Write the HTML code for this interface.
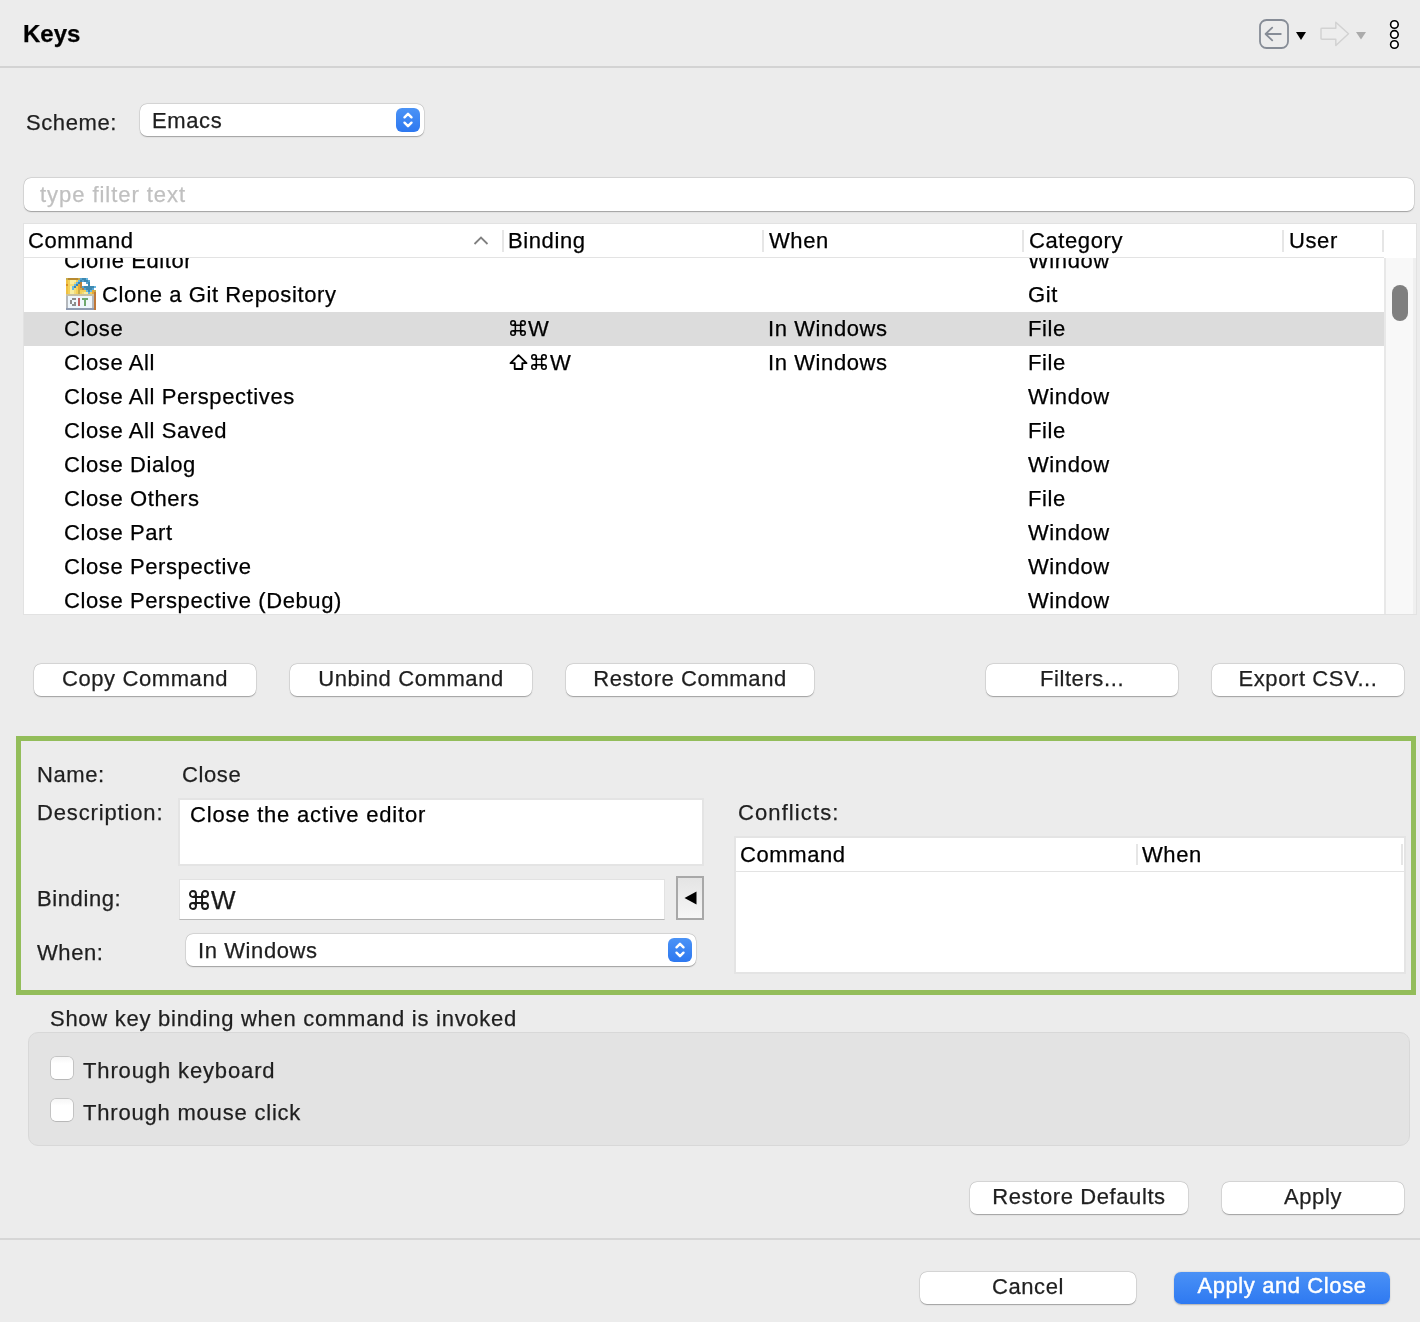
<!DOCTYPE html>
<html><head><meta charset="utf-8">
<style>
*{box-sizing:border-box;margin:0;padding:0}
html,body{-webkit-font-smoothing:antialiased;-webkit-text-stroke:0.25px currentColor;width:1420px;height:1322px;overflow:hidden;background:#ececec;font-family:"Liberation Sans",sans-serif;color:#1f1f1f}
.a{position:absolute}
.t{position:absolute;font-size:22px;line-height:25px;white-space:nowrap;letter-spacing:0.6px}
.btn{position:absolute;background:#fff;border-radius:7px;box-shadow:0 0 0 0.5px rgba(0,0,0,0.13),0 0.5px 1.2px rgba(0,0,0,0.28);font-size:22px;line-height:30px;text-align:center;letter-spacing:0.6px;color:#1f1f1f;white-space:nowrap}
.hsep{position:absolute;width:2px;background:#e6e6e6}
.k{color:#000}
</style></head><body><div style="position:absolute;left:0;top:0;width:1420px;height:1322px;will-change:transform">

<div class="a" style="left:23px;top:20px;font-size:24px;line-height:27px;font-weight:bold;color:#000">Keys</div>
<div class="a" style="left:0;top:66px;width:1420px;height:2px;background:#d3d3d3"></div>
<svg class="a" style="left:1250px;top:10px" width="170" height="48" viewBox="1250 10 170 48"><rect x="1260" y="20" width="28" height="28" rx="6.5" fill="none" stroke="#868c96" stroke-width="1.8"/><path d="M1280.8 34H1265.6M1272.2 27.6L1265.6 34L1272.2 40.4" fill="none" stroke="#868c96" stroke-width="1.8" stroke-linecap="round" stroke-linejoin="round"/><path d="M1296 32H1306L1301 40Z" fill="#000"/><path d="M1321 29V38.5Q1321 39.2 1322 39.2H1335.8V45.5L1348.5 33.8L1335.8 22.3V28.3H1322Q1321 28.3 1321 29Z" fill="#ededed" stroke="#d2d2d2" stroke-width="1.5" stroke-linejoin="round"/><path d="M1356 32H1366L1361 39.5Z" fill="#ababab"/><circle cx="1394.4" cy="24.5" r="3.8" fill="#fff" stroke="#000" stroke-width="1.6"/><circle cx="1394.4" cy="34.4" r="3.8" fill="#fff" stroke="#000" stroke-width="1.6"/><circle cx="1394.4" cy="44.5" r="3.8" fill="#fff" stroke="#000" stroke-width="1.6"/></svg>
<div class="t" style="left:26px;top:110px;">Scheme:</div>
<div class="a" style="left:140px;top:104px;width:284px;height:32px;background:#fff;border-radius:7px;box-shadow:0 0 0 0.5px rgba(0,0,0,0.13),0 0.5px 1.2px rgba(0,0,0,0.28)"></div>
<div class="t" style="left:152px;top:108px;">Emacs</div>
<div class="a" style="left:396px;top:108px;width:24px;height:24px;border-radius:6px;background:linear-gradient(#4b93f6,#2d78f0)"><svg class="a" style="left:0;top:0" width="24" height="24" viewBox="0 0 24 24"><path d="M8.5 9.3L12 5.8L15.5 9.3M8.5 14.7L12 18.2L15.5 14.7" fill="none" stroke="#fff" stroke-width="2.4" stroke-linecap="round" stroke-linejoin="round"/></svg></div>
<div class="a" style="left:24px;top:178px;width:1390px;height:33px;background:#fff;border-radius:7px;box-shadow:0 0 0 0.5px rgba(0,0,0,0.13),0 0.5px 1.2px rgba(0,0,0,0.28)"></div>
<div class="t" style="left:40px;top:182px;color:#c0c0c0;letter-spacing:0.95px">type filter text</div>
<div class="a" style="left:23px;top:223px;width:1394px;height:392px;background:#fff;border:1px solid #e2e2e2"></div>
<div class="a" style="left:24px;top:257px;width:1360px;height:1px;background:#e3e3e3"></div>
<div class="t" style="left:28px;top:228px;color:#000">Command</div>
<svg class="a" style="left:472px;top:235px" width="18" height="12" viewBox="0 0 18 12"><path d="M2.5 9L9 2.5L15.5 9" fill="none" stroke="#808080" stroke-width="1.8"/></svg>
<div class="hsep" style="left:502px;top:230px;height:22px"></div>
<div class="t" style="left:508px;top:228px;color:#000">Binding</div>
<div class="hsep" style="left:762px;top:230px;height:22px"></div>
<div class="t" style="left:769px;top:228px;color:#000">When</div>
<div class="hsep" style="left:1022px;top:230px;height:22px"></div>
<div class="t" style="left:1029px;top:228px;color:#000">Category</div>
<div class="hsep" style="left:1282px;top:230px;height:22px"></div>
<div class="t" style="left:1289px;top:228px;color:#000">User</div>
<div class="hsep" style="left:1382px;top:230px;height:22px"></div>
<div class="a" style="left:24px;top:258px;width:1360px;height:356px;overflow:hidden">
<div class="a" style="left:0;top:-14px;width:1360px;height:34px;">
<div class="t" style="left:40px;top:4px;color:#000">Clone Editor</div>
<div class="t" style="left:1004px;top:4px;color:#000">Window</div>
</div>
<div class="a" style="left:0;top:20px;width:1360px;height:34px;">
<div class="t" style="left:78px;top:4px;color:#000">Clone a Git Repository</div>
<div class="t" style="left:1004px;top:4px;color:#000">Git</div>
<svg class="a" style="left:42px;top:0px" width="30" height="32" viewBox="0 0 15 16" shape-rendering="crispEdges"><rect x="0" y="0" width="1" height="1" fill="#c8ac48"/><rect x="1" y="0" width="1" height="1" fill="#b88a30"/><rect x="2" y="0" width="1" height="1" fill="#b88a30"/><rect x="3" y="0" width="1" height="1" fill="#b88a30"/><rect x="4" y="0" width="1" height="1" fill="#b88a30"/><rect x="5" y="0" width="1" height="1" fill="#b88a30"/><rect x="6" y="0" width="1" height="1" fill="#c8ac48"/><rect x="7" y="0" width="1" height="1" fill="#58a4d0"/><rect x="8" y="0" width="1" height="1" fill="#3d88b0"/><rect x="9" y="0" width="1" height="1" fill="#3d88b0"/><rect x="10" y="0" width="1" height="1" fill="#68b8e2"/><rect x="0" y="1" width="1" height="1" fill="#f0c040"/><rect x="1" y="1" width="1" height="1" fill="#f4d058"/><rect x="2" y="1" width="1" height="1" fill="#f8eea0"/><rect x="3" y="1" width="1" height="1" fill="#f8eea0"/><rect x="4" y="1" width="1" height="1" fill="#f8eea0"/><rect x="5" y="1" width="1" height="1" fill="#f4d058"/><rect x="6" y="1" width="1" height="1" fill="#68b8e2"/><rect x="7" y="1" width="1" height="1" fill="#3d88b0"/><rect x="8" y="1" width="1" height="1" fill="#58a4d0"/><rect x="9" y="1" width="1" height="1" fill="#3d88b0"/><rect x="10" y="1" width="1" height="1" fill="#3d88b0"/><rect x="11" y="1" width="1" height="1" fill="#58a4d0"/><rect x="0" y="2" width="1" height="1" fill="#f0c040"/><rect x="1" y="2" width="1" height="1" fill="#f4d058"/><rect x="2" y="2" width="1" height="1" fill="#f8eea0"/><rect x="3" y="2" width="1" height="1" fill="#f8eea0"/><rect x="4" y="2" width="1" height="1" fill="#f3dc78"/><rect x="5" y="2" width="1" height="1" fill="#68b8e2"/><rect x="6" y="2" width="1" height="1" fill="#3d88b0"/><rect x="7" y="2" width="1" height="1" fill="#b8823a"/><rect x="8" y="2" width="1" height="1" fill="#ffffff"/><rect x="9" y="2" width="1" height="1" fill="#ffffff"/><rect x="10" y="2" width="1" height="1" fill="#58a4d0"/><rect x="11" y="2" width="1" height="1" fill="#3d88b0"/><rect x="0" y="3" width="1" height="1" fill="#d89028"/><rect x="1" y="3" width="1" height="1" fill="#f4d058"/><rect x="2" y="3" width="1" height="1" fill="#f3dc78"/><rect x="3" y="3" width="1" height="1" fill="#f3dc78"/><rect x="4" y="3" width="1" height="1" fill="#68b8e2"/><rect x="5" y="3" width="1" height="1" fill="#3d88b0"/><rect x="6" y="3" width="1" height="1" fill="#e4a838"/><rect x="7" y="3" width="1" height="1" fill="#b8823a"/><rect x="8" y="3" width="1" height="1" fill="#ffffff"/><rect x="9" y="3" width="1" height="1" fill="#ffffff"/><rect x="10" y="3" width="1" height="1" fill="#ffffff"/><rect x="11" y="3" width="1" height="1" fill="#3d88b0"/><rect x="0" y="4" width="1" height="1" fill="#f0c040"/><rect x="1" y="4" width="1" height="1" fill="#f4d058"/><rect x="2" y="4" width="1" height="1" fill="#f8eea0"/><rect x="3" y="4" width="1" height="1" fill="#68b8e2"/><rect x="4" y="4" width="1" height="1" fill="#3d88b0"/><rect x="5" y="4" width="1" height="1" fill="#f4d058"/><rect x="6" y="4" width="1" height="1" fill="#e4a838"/><rect x="7" y="4" width="1" height="1" fill="#b8823a"/><rect x="8" y="4" width="1" height="1" fill="#58a4d0"/><rect x="9" y="4" width="1" height="1" fill="#3d88b0"/><rect x="10" y="4" width="1" height="1" fill="#3d88b0"/><rect x="11" y="4" width="1" height="1" fill="#3d88b0"/><rect x="12" y="4" width="1" height="1" fill="#3d88b0"/><rect x="13" y="4" width="1" height="1" fill="#3d88b0"/><rect x="14" y="4" width="1" height="1" fill="#68b8e2"/><rect x="0" y="5" width="1" height="1" fill="#f0c040"/><rect x="1" y="5" width="1" height="1" fill="#f4d058"/><rect x="2" y="5" width="1" height="1" fill="#f8eea0"/><rect x="3" y="5" width="1" height="1" fill="#68b8e2"/><rect x="4" y="5" width="1" height="1" fill="#f3dc78"/><rect x="5" y="5" width="1" height="1" fill="#f4d058"/><rect x="6" y="5" width="1" height="1" fill="#e4a838"/><rect x="7" y="5" width="1" height="1" fill="#c8ac48"/><rect x="8" y="5" width="1" height="1" fill="#b8823a"/><rect x="9" y="5" width="1" height="1" fill="#58a4d0"/><rect x="10" y="5" width="1" height="1" fill="#3d88b0"/><rect x="11" y="5" width="1" height="1" fill="#3d88b0"/><rect x="12" y="5" width="1" height="1" fill="#3d88b0"/><rect x="13" y="5" width="1" height="1" fill="#58a4d0"/><rect x="0" y="6" width="1" height="1" fill="#f0c040"/><rect x="1" y="6" width="1" height="1" fill="#f4d058"/><rect x="2" y="6" width="1" height="1" fill="#f8eea0"/><rect x="3" y="6" width="1" height="1" fill="#f8eea0"/><rect x="4" y="6" width="1" height="1" fill="#f3dc78"/><rect x="5" y="6" width="1" height="1" fill="#f4d058"/><rect x="6" y="6" width="1" height="1" fill="#c8ac48"/><rect x="7" y="6" width="1" height="1" fill="#f4d058"/><rect x="8" y="6" width="1" height="1" fill="#f4d058"/><rect x="9" y="6" width="1" height="1" fill="#f4d058"/><rect x="10" y="6" width="1" height="1" fill="#68b8e2"/><rect x="11" y="6" width="1" height="1" fill="#3d88b0"/><rect x="12" y="6" width="1" height="1" fill="#68b8e2"/><rect x="13" y="6" width="1" height="1" fill="#e4a838"/><rect x="14" y="6" width="1" height="1" fill="#c8ac48"/><rect x="0" y="7" width="1" height="1" fill="#f0c040"/><rect x="1" y="7" width="1" height="1" fill="#f4d058"/><rect x="2" y="7" width="1" height="1" fill="#f8eea0"/><rect x="3" y="7" width="1" height="1" fill="#f8eea0"/><rect x="4" y="7" width="1" height="1" fill="#f3dc78"/><rect x="5" y="7" width="1" height="1" fill="#f4d058"/><rect x="6" y="7" width="1" height="1" fill="#c8ac48"/><rect x="7" y="7" width="1" height="1" fill="#f4d058"/><rect x="8" y="7" width="1" height="1" fill="#f3dc78"/><rect x="9" y="7" width="1" height="1" fill="#f8eea0"/><rect x="10" y="7" width="1" height="1" fill="#f8eea0"/><rect x="11" y="7" width="1" height="1" fill="#68b8e2"/><rect x="12" y="7" width="1" height="1" fill="#f4d058"/><rect x="13" y="7" width="1" height="1" fill="#e4a838"/><rect x="14" y="7" width="1" height="1" fill="#c07838"/><rect x="0" y="8" width="1" height="1" fill="#c8c0a0"/><rect x="1" y="8" width="1" height="1" fill="#c8c0a0"/><rect x="2" y="8" width="1" height="1" fill="#c8c0a0"/><rect x="3" y="8" width="1" height="1" fill="#c8c0a0"/><rect x="4" y="8" width="1" height="1" fill="#c8c0a0"/><rect x="5" y="8" width="1" height="1" fill="#c8c0a0"/><rect x="6" y="8" width="1" height="1" fill="#c8c0a0"/><rect x="7" y="8" width="1" height="1" fill="#c8c0a0"/><rect x="8" y="8" width="1" height="1" fill="#c8c0a0"/><rect x="9" y="8" width="1" height="1" fill="#c8c0a0"/><rect x="10" y="8" width="1" height="1" fill="#c8c0a0"/><rect x="11" y="8" width="1" height="1" fill="#c8c0a0"/><rect x="12" y="8" width="1" height="1" fill="#c8c0a0"/><rect x="13" y="8" width="1" height="1" fill="#c8c0a0"/><rect x="14" y="8" width="1" height="1" fill="#c07838"/><rect x="0" y="9" width="1" height="1" fill="#b4b8bc"/><rect x="1" y="9" width="1" height="1" fill="#eef6fc"/><rect x="2" y="9" width="1" height="1" fill="#eef6fc"/><rect x="3" y="9" width="1" height="1" fill="#eef6fc"/><rect x="4" y="9" width="1" height="1" fill="#eef6fc"/><rect x="5" y="9" width="1" height="1" fill="#eef6fc"/><rect x="6" y="9" width="1" height="1" fill="#eef6fc"/><rect x="7" y="9" width="1" height="1" fill="#eef6fc"/><rect x="8" y="9" width="1" height="1" fill="#eef6fc"/><rect x="9" y="9" width="1" height="1" fill="#eef6fc"/><rect x="10" y="9" width="1" height="1" fill="#eef6fc"/><rect x="11" y="9" width="1" height="1" fill="#eef6fc"/><rect x="12" y="9" width="1" height="1" fill="#eef6fc"/><rect x="13" y="9" width="1" height="1" fill="#b4b8bc"/><rect x="14" y="9" width="1" height="1" fill="#c07838"/><rect x="0" y="10" width="1" height="1" fill="#b4b8bc"/><rect x="1" y="10" width="1" height="1" fill="#eef6fc"/><rect x="2" y="10" width="1" height="1" fill="#eef6fc"/><rect x="3" y="10" width="1" height="1" fill="#8c8c8c"/><rect x="4" y="10" width="1" height="1" fill="#8c8c8c"/><rect x="5" y="10" width="1" height="1" fill="#eef6fc"/><rect x="6" y="10" width="1" height="1" fill="#c25e5e"/><rect x="7" y="10" width="1" height="1" fill="#eef6fc"/><rect x="8" y="10" width="1" height="1" fill="#6ea86e"/><rect x="9" y="10" width="1" height="1" fill="#6ea86e"/><rect x="10" y="10" width="1" height="1" fill="#6ea86e"/><rect x="11" y="10" width="1" height="1" fill="#eef6fc"/><rect x="12" y="10" width="1" height="1" fill="#eef6fc"/><rect x="13" y="10" width="1" height="1" fill="#b4b8bc"/><rect x="14" y="10" width="1" height="1" fill="#c07838"/><rect x="0" y="11" width="1" height="1" fill="#b4b8bc"/><rect x="1" y="11" width="1" height="1" fill="#eef6fc"/><rect x="2" y="11" width="1" height="1" fill="#8c8c8c"/><rect x="3" y="11" width="1" height="1" fill="#eef6fc"/><rect x="4" y="11" width="1" height="1" fill="#eef6fc"/><rect x="5" y="11" width="1" height="1" fill="#eef6fc"/><rect x="6" y="11" width="1" height="1" fill="#c25e5e"/><rect x="7" y="11" width="1" height="1" fill="#eef6fc"/><rect x="8" y="11" width="1" height="1" fill="#eef6fc"/><rect x="9" y="11" width="1" height="1" fill="#6ea86e"/><rect x="10" y="11" width="1" height="1" fill="#eef6fc"/><rect x="11" y="11" width="1" height="1" fill="#eef6fc"/><rect x="12" y="11" width="1" height="1" fill="#eef6fc"/><rect x="13" y="11" width="1" height="1" fill="#b4b8bc"/><rect x="14" y="11" width="1" height="1" fill="#c07838"/><rect x="0" y="12" width="1" height="1" fill="#b4b8bc"/><rect x="1" y="12" width="1" height="1" fill="#eef6fc"/><rect x="2" y="12" width="1" height="1" fill="#8c8c8c"/><rect x="3" y="12" width="1" height="1" fill="#eef6fc"/><rect x="4" y="12" width="1" height="1" fill="#8c8c8c"/><rect x="5" y="12" width="1" height="1" fill="#eef6fc"/><rect x="6" y="12" width="1" height="1" fill="#c25e5e"/><rect x="7" y="12" width="1" height="1" fill="#eef6fc"/><rect x="8" y="12" width="1" height="1" fill="#eef6fc"/><rect x="9" y="12" width="1" height="1" fill="#6ea86e"/><rect x="10" y="12" width="1" height="1" fill="#eef6fc"/><rect x="11" y="12" width="1" height="1" fill="#eef6fc"/><rect x="12" y="12" width="1" height="1" fill="#eef6fc"/><rect x="13" y="12" width="1" height="1" fill="#b4b8bc"/><rect x="14" y="12" width="1" height="1" fill="#c07838"/><rect x="0" y="13" width="1" height="1" fill="#b4b8bc"/><rect x="1" y="13" width="1" height="1" fill="#eef6fc"/><rect x="2" y="13" width="1" height="1" fill="#eef6fc"/><rect x="3" y="13" width="1" height="1" fill="#8c8c8c"/><rect x="4" y="13" width="1" height="1" fill="#8c8c8c"/><rect x="5" y="13" width="1" height="1" fill="#eef6fc"/><rect x="6" y="13" width="1" height="1" fill="#c25e5e"/><rect x="7" y="13" width="1" height="1" fill="#eef6fc"/><rect x="8" y="13" width="1" height="1" fill="#eef6fc"/><rect x="9" y="13" width="1" height="1" fill="#6ea86e"/><rect x="10" y="13" width="1" height="1" fill="#eef6fc"/><rect x="11" y="13" width="1" height="1" fill="#eef6fc"/><rect x="12" y="13" width="1" height="1" fill="#eef6fc"/><rect x="13" y="13" width="1" height="1" fill="#b4b8bc"/><rect x="14" y="13" width="1" height="1" fill="#c07838"/><rect x="0" y="14" width="1" height="1" fill="#b4b8bc"/><rect x="1" y="14" width="1" height="1" fill="#eef6fc"/><rect x="2" y="14" width="1" height="1" fill="#eef6fc"/><rect x="3" y="14" width="1" height="1" fill="#eef6fc"/><rect x="4" y="14" width="1" height="1" fill="#eef6fc"/><rect x="5" y="14" width="1" height="1" fill="#eef6fc"/><rect x="6" y="14" width="1" height="1" fill="#eef6fc"/><rect x="7" y="14" width="1" height="1" fill="#eef6fc"/><rect x="8" y="14" width="1" height="1" fill="#eef6fc"/><rect x="9" y="14" width="1" height="1" fill="#eef6fc"/><rect x="10" y="14" width="1" height="1" fill="#eef6fc"/><rect x="11" y="14" width="1" height="1" fill="#eef6fc"/><rect x="12" y="14" width="1" height="1" fill="#eef6fc"/><rect x="13" y="14" width="1" height="1" fill="#b4b8bc"/><rect x="14" y="14" width="1" height="1" fill="#c07838"/><rect x="0" y="15" width="1" height="1" fill="#8e9ab0"/><rect x="1" y="15" width="1" height="1" fill="#8e9ab0"/><rect x="2" y="15" width="1" height="1" fill="#8e9ab0"/><rect x="3" y="15" width="1" height="1" fill="#8e9ab0"/><rect x="4" y="15" width="1" height="1" fill="#8e9ab0"/><rect x="5" y="15" width="1" height="1" fill="#8e9ab0"/><rect x="6" y="15" width="1" height="1" fill="#8e9ab0"/><rect x="7" y="15" width="1" height="1" fill="#8e9ab0"/><rect x="8" y="15" width="1" height="1" fill="#8e9ab0"/><rect x="9" y="15" width="1" height="1" fill="#8e9ab0"/><rect x="10" y="15" width="1" height="1" fill="#8e9ab0"/><rect x="11" y="15" width="1" height="1" fill="#8e9ab0"/><rect x="12" y="15" width="1" height="1" fill="#8e9ab0"/><rect x="13" y="15" width="1" height="1" fill="#8e9ab0"/><rect x="14" y="15" width="1" height="1" fill="#c07838"/></svg>
</div>
<div class="a" style="left:0;top:54px;width:1360px;height:34px;background:#dcdcdc;">
<div class="t" style="left:40px;top:4px;color:#000">Close</div>
<svg class="a" style="left:486px;top:8px" width="16" height="16" viewBox="0 0 16 16"><g fill="none" stroke="#000" stroke-width="1.5"><path d="M5.35 3.05V12.95M10.649999999999999 3.05V12.95M3.05 5.35H12.95M3.05 10.649999999999999H12.95"/><circle cx="3.05" cy="3.05" r="2.3"/><circle cx="12.95" cy="3.05" r="2.3"/><circle cx="3.05" cy="12.95" r="2.3"/><circle cx="12.95" cy="12.95" r="2.3"/></g></svg>
<div class="t" style="left:504px;top:4px;color:#000">W</div>
<div class="t" style="left:744px;top:4px;color:#000">In Windows</div>
<div class="t" style="left:1004px;top:4px;color:#000">File</div>
</div>
<div class="a" style="left:0;top:88px;width:1360px;height:34px;">
<div class="t" style="left:40px;top:4px;color:#000">Close All</div>
<svg class="a" style="left:485px;top:8px" width="19" height="17" viewBox="0 0 19 17"><path d="M9.5 1.2L17.5 9.2H13.3V15H5.7V9.2H1.5Z" fill="none" stroke="#000" stroke-width="1.8" stroke-linejoin="round"/></svg>
<svg class="a" style="left:507px;top:8px" width="16" height="16" viewBox="0 0 16 16"><g fill="none" stroke="#000" stroke-width="1.5"><path d="M5.35 3.05V12.95M10.649999999999999 3.05V12.95M3.05 5.35H12.95M3.05 10.649999999999999H12.95"/><circle cx="3.05" cy="3.05" r="2.3"/><circle cx="12.95" cy="3.05" r="2.3"/><circle cx="3.05" cy="12.95" r="2.3"/><circle cx="12.95" cy="12.95" r="2.3"/></g></svg>
<div class="t" style="left:526px;top:4px;color:#000">W</div>
<div class="t" style="left:744px;top:4px;color:#000">In Windows</div>
<div class="t" style="left:1004px;top:4px;color:#000">File</div>
</div>
<div class="a" style="left:0;top:122px;width:1360px;height:34px;">
<div class="t" style="left:40px;top:4px;color:#000">Close All Perspectives</div>
<div class="t" style="left:1004px;top:4px;color:#000">Window</div>
</div>
<div class="a" style="left:0;top:156px;width:1360px;height:34px;">
<div class="t" style="left:40px;top:4px;color:#000">Close All Saved</div>
<div class="t" style="left:1004px;top:4px;color:#000">File</div>
</div>
<div class="a" style="left:0;top:190px;width:1360px;height:34px;">
<div class="t" style="left:40px;top:4px;color:#000">Close Dialog</div>
<div class="t" style="left:1004px;top:4px;color:#000">Window</div>
</div>
<div class="a" style="left:0;top:224px;width:1360px;height:34px;">
<div class="t" style="left:40px;top:4px;color:#000">Close Others</div>
<div class="t" style="left:1004px;top:4px;color:#000">File</div>
</div>
<div class="a" style="left:0;top:258px;width:1360px;height:34px;">
<div class="t" style="left:40px;top:4px;color:#000">Close Part</div>
<div class="t" style="left:1004px;top:4px;color:#000">Window</div>
</div>
<div class="a" style="left:0;top:292px;width:1360px;height:34px;">
<div class="t" style="left:40px;top:4px;color:#000">Close Perspective</div>
<div class="t" style="left:1004px;top:4px;color:#000">Window</div>
</div>
<div class="a" style="left:0;top:326px;width:1360px;height:34px;">
<div class="t" style="left:40px;top:4px;color:#000">Close Perspective (Debug)</div>
<div class="t" style="left:1004px;top:4px;color:#000">Window</div>
</div>
</div>
<div class="a" style="left:1384px;top:258px;width:32px;height:356px;background:#f8f8f8;border-left:2px solid #e8e8e8;border-right:3px solid #efefef"></div>
<div class="a" style="left:1392px;top:285px;width:16px;height:36px;border-radius:8px;background:#7f7f7f"></div>
<div class="btn" style="left:34px;top:664px;width:222px;height:32px">Copy Command</div>
<div class="btn" style="left:290px;top:664px;width:242px;height:32px">Unbind Command</div>
<div class="btn" style="left:566px;top:664px;width:248px;height:32px">Restore Command</div>
<div class="btn" style="left:986px;top:664px;width:192px;height:32px">Filters...</div>
<div class="btn" style="left:1212px;top:664px;width:192px;height:32px">Export CSV...</div>
<div class="a" style="left:16px;top:736px;width:1400px;height:259px;border:5px solid #93bd5a"></div>
<div class="t" style="left:37px;top:762px;">Name:</div>
<div class="t" style="left:182px;top:762px;">Close</div>
<div class="t" style="left:37px;top:800px;letter-spacing:0.85px">Description:</div>
<div class="a" style="left:178px;top:798px;width:526px;height:68px;background:#fff;border:2px solid #e4e4e4"></div>
<div class="t" style="left:190px;top:802px;color:#000;letter-spacing:0.8px">Close the active editor</div>
<div class="t" style="left:37px;top:886px;">Binding:</div>
<div class="a" style="left:179px;top:879px;width:486px;height:41px;background:#fff;border:1px solid #e2e2e2;border-bottom:1.5px solid #b8b8b8"></div>
<svg class="a" style="left:189px;top:890px" width="20" height="20" viewBox="0 0 20 20"><g fill="none" stroke="#1a1a1a" stroke-width="1.9"><path d="M6.95 3.95V16.05M13.05 3.95V16.05M3.95 6.95H16.05M3.95 13.05H16.05"/><circle cx="3.95" cy="3.95" r="3.0"/><circle cx="16.05" cy="3.95" r="3.0"/><circle cx="3.95" cy="16.05" r="3.0"/><circle cx="16.05" cy="16.05" r="3.0"/></g></svg>
<div class="a" style="left:211px;top:886px;font-size:26px;line-height:29px;color:#1a1a1a">W</div>
<div class="a" style="left:676px;top:876px;width:28px;height:44px;border:2px solid #a8a8a8;background:linear-gradient(#e4e4e4,#f6f6f6)"></div>
<svg class="a" style="left:683.5px;top:891px" width="13" height="14" viewBox="0 0 13 14"><path d="M0.5 7L12.5 0.5V13.5Z" fill="#000"/></svg>
<div class="t" style="left:37px;top:940px;">When:</div>
<div class="a" style="left:186px;top:934px;width:510px;height:32px;background:#fff;border-radius:7px;box-shadow:0 0 0 0.5px rgba(0,0,0,0.13),0 0.5px 1.2px rgba(0,0,0,0.28)"></div>
<div class="t" style="left:198px;top:938px;">In Windows</div>
<div class="a" style="left:668px;top:938px;width:24px;height:24px;border-radius:6px;background:linear-gradient(#4b93f6,#2d78f0)"><svg class="a" style="left:0;top:0" width="24" height="24" viewBox="0 0 24 24"><path d="M8.5 9.3L12 5.8L15.5 9.3M8.5 14.7L12 18.2L15.5 14.7" fill="none" stroke="#fff" stroke-width="2.4" stroke-linecap="round" stroke-linejoin="round"/></svg></div>
<div class="t" style="left:738px;top:800px;letter-spacing:1.1px">Conflicts:</div>
<div class="a" style="left:734px;top:836px;width:672px;height:138px;background:#fff;border:2px solid #e4e4e4"></div>
<div class="a" style="left:736px;top:871px;width:668px;height:1px;background:#e3e3e3"></div>
<div class="t" style="left:740px;top:842px;color:#000">Command</div>
<div class="hsep" style="left:1136px;top:844px;height:21px"></div>
<div class="t" style="left:1142px;top:842px;color:#000">When</div>
<div class="hsep" style="left:1401px;top:844px;height:21px"></div>
<div class="t" style="left:50px;top:1006px;letter-spacing:0.73px">Show key binding when command is invoked</div>
<div class="a" style="left:28px;top:1032px;width:1382px;height:114px;border-radius:10px;background:#e3e3e3;border:1px solid #d8d8d8"></div>
<div class="a" style="left:51px;top:1057px;width:22px;height:22px;border-radius:5px;background:linear-gradient(#f6f6f6,#fff 30%);box-shadow:0 0 0 0.8px rgba(0,0,0,0.17),0 0.5px 0.8px rgba(0,0,0,0.08)"></div>
<div class="t" style="left:83px;top:1058px;letter-spacing:0.87px">Through keyboard</div>
<div class="a" style="left:51px;top:1099px;width:22px;height:22px;border-radius:5px;background:linear-gradient(#f6f6f6,#fff 30%);box-shadow:0 0 0 0.8px rgba(0,0,0,0.17),0 0.5px 0.8px rgba(0,0,0,0.08)"></div>
<div class="t" style="left:83px;top:1100px;letter-spacing:0.8px">Through mouse click</div>
<div class="btn" style="left:970px;top:1182px;width:218px;height:32px">Restore Defaults</div>
<div class="btn" style="left:1222px;top:1182px;width:182px;height:32px">Apply</div>
<div class="a" style="left:0;top:1238px;width:1420px;height:2px;background:#d6d6d6"></div>
<div class="btn" style="left:920px;top:1272px;width:216px;height:32px">Cancel</div>
<div class="btn" style="left:1174px;top:1272px;width:216px;height:32px;background:linear-gradient(#4a91f6,#2e79f1);color:#fff;line-height:28px;-webkit-text-stroke:0.45px #fff;box-shadow:0 0.5px 1.5px rgba(0,0,0,0.25)">Apply and Close</div>
</div></body></html>
